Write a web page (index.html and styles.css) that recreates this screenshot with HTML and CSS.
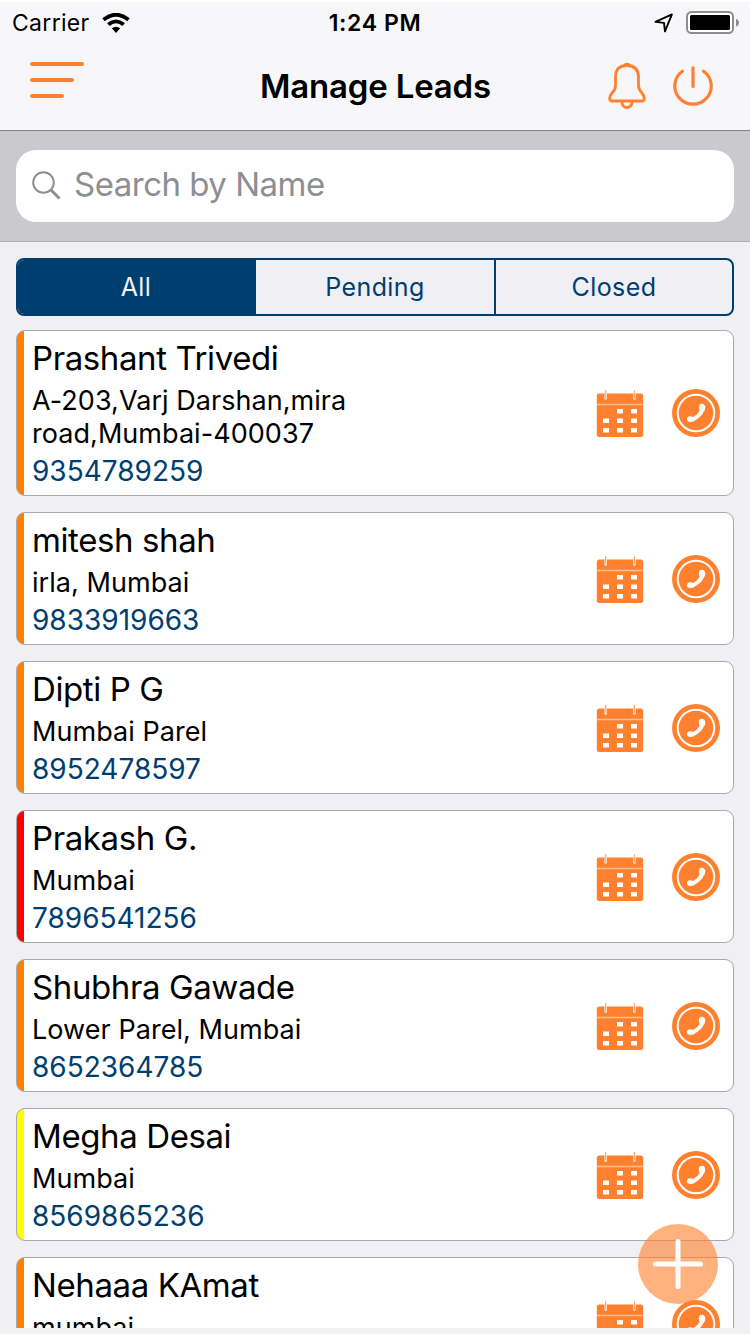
FILE: index.html
```html
<!DOCTYPE html>
<html lang="en">

<head>
    <meta charset="UTF-8">
    <meta name="viewport" content="width=device-width, initial-scale=1.0">
    <title>Manage Leads</title>
    <link rel="stylesheet" href="styles.css">
</head>

<body>
    <!-- shared icons -->
    <svg class="sprite" width="0" height="0">
        <symbol id="calendar" viewBox="0 0 48 48">
            <rect x="0.8" y="4.600" width="46.4" height="43.400" rx="2.5" fill="#ff812f" />
            <path d="M1 15.500h46" stroke="#ffc093" stroke-width="1.4" />
            <path d="M9.700 5v4.500M38.500 5v4.500" stroke="#fff" stroke-width="2.400" stroke-linecap="round" />
            <path d="M9.700 1.500v7.500M38.500 1.500v7.500" stroke="#ffa870" stroke-width="1.3" stroke-linecap="round" />
            <path d="M21 20h6v4.500h-6zM35 20h6v4.500h-6zM7 29.5h6v4.500h-6zM21 29.5h6v4.500h-6zM35 29.5h6v4.500h-6zM7 39h6v4.500h-6zM21 39h6v4.500h-6zM35 39h6v4.500h-6z" fill="#fff" />
        </symbol>
        <symbol id="call" viewBox="0 0 48 48">
            <circle cx="24" cy="24" r="24" fill="#ff812f" />
            <circle cx="24" cy="24" r="18.3" fill="none" stroke="#fff" stroke-width="2" />
            <path d="M26.800 18q0-3 3-3.200 3.300.2 3.500 3.700-.1 3.300-1.500 4.100-2 5-8.500 8.600-1.300 1.700-4.700 1.800-3.600.1-3.700-2.400.1-3 3-3.400 2.200-.1 3.300.9 4.700-2.400 6.500-6.400-.9-1-.9-3.700z" fill="#fff" />
        </symbol>
    </svg>

    <div class="screen">
        <header class="top">
            <div class="status-bar">
                <div class="carrier">
                    <span>Carrier</span>
                    <svg width="28" height="20" viewBox="0 0 28 20">
                        <path d="M1.500 6.800Q14-3.400 26.500 6.800M6.300 11.500Q14 5.300 21.700 11.500" fill="none" stroke="#000" stroke-width="3.800" />
                        <path d="M14 20l-4.200-4.700q4.200-3 8.400 0z" />
                    </svg>
                </div>
                <div class="time">1:24 PM</div>
                <div class="battery">
                    <svg class="location" width="20" height="20" viewBox="0 0 20 20">
                        <path d="M1.500 8.900L17.900 1.400 11 18.400 10 9.900z" fill="none" stroke="#000" stroke-width="1.900" stroke-linejoin="round" />
                    </svg>
                    <svg width="53" height="24" viewBox="0 0 53 24">
                        <rect x="1" y="1" width="46" height="21" rx="4.500" fill="#fff" stroke="#8e8e90" stroke-width="2" />
                        <rect x="4" y="4" width="40" height="15" rx="1.500" />
                        <path d="M50 8q3 1 3 3.800t-3 3.700z" fill="#8e8e90" />
                    </svg>
                </div>
            </div>
            <div class="nav-bar">
                <svg class="menu" width="54" height="38" viewBox="0 0 54 38">
                    <path d="M2 3h50M2 19h40M2 35h30" stroke="#ff812f" stroke-width="4" stroke-linecap="round" />
                </svg>
                <h1>Manage Leads</h1>
                <div class="nav-actions">
                    <svg width="38" height="48" viewBox="0 0 38 48">
                        <g fill="none" stroke="#ff812f" stroke-width="2.800" stroke-linejoin="round">
                            <path d="M7.500 15.500Q7.500 3.500 19 3.500t11.500 12v8Q30.500 27.500 34 31q2.600 3.200 2.300 6.100-.3 1.900-2.200 1.900H3.900q-1.900 0-2.200-1.900Q1.400 34.200 4 31q3.500-3.500 3.500-7.500z" />
                            <path d="M13.800 40q.8 5.500 5.200 5.500t5.200-5.500" />
                        </g>
                        <path d="M14.600 4q1.200-3.300 4.400-3.300t4.400 3.300z" fill="#ff812f" />
                    </svg>
                    <svg width="40" height="40" viewBox="0 0 40 40">
                        <path d="M20 1.800v18.700M9.400 5.200A18.200 18.200 0 1 0 30.600 5.200" fill="none" stroke="#ff812f" stroke-width="3.200" stroke-linecap="round" />
                    </svg>
                </div>
            </div>
        </header>

        <div class="search">
            <div class="search-box">
                <svg width="30" height="30" viewBox="0 0 30 30">
                    <circle cx="11.500" cy="11.500" r="10.300" fill="none" stroke="#8e8e93" stroke-width="2" />
                    <path d="M18.800 18.800L27.500 27.500" stroke="#8e8e93" stroke-width="3" />
                </svg>
                <span>Search by Name</span>
            </div>
        </div>

        <div class="tabs">
            <div class="tab active">All</div>
            <div class="tab">Pending</div>
            <div class="tab">Closed</div>
        </div>

        <main class="leads">
            <div class="lead">
                <div class="info">
                    <div class="name">Prashant Trivedi</div>
                    <div class="address">A-203,Varj Darshan,mira<br>road,Mumbai-400037</div>
                    <div class="phone">9354789259</div>
                </div>
                <svg class="icon"><use href="#calendar" /></svg>
                <svg class="icon"><use href="#call" /></svg>
            </div>
            <div class="lead">
                <div class="info">
                    <div class="name">mitesh shah</div>
                    <div class="address">irla, Mumbai</div>
                    <div class="phone">9833919663</div>
                </div>
                <svg class="icon"><use href="#calendar" /></svg>
                <svg class="icon"><use href="#call" /></svg>
            </div>
            <div class="lead">
                <div class="info">
                    <div class="name">Dipti P G</div>
                    <div class="address">Mumbai Parel</div>
                    <div class="phone">8952478597</div>
                </div>
                <svg class="icon"><use href="#calendar" /></svg>
                <svg class="icon"><use href="#call" /></svg>
            </div>
            <div class="lead red">
                <div class="info">
                    <div class="name">Prakash G.</div>
                    <div class="address">Mumbai</div>
                    <div class="phone">7896541256</div>
                </div>
                <svg class="icon"><use href="#calendar" /></svg>
                <svg class="icon"><use href="#call" /></svg>
            </div>
            <div class="lead">
                <div class="info">
                    <div class="name">Shubhra Gawade</div>
                    <div class="address">Lower Parel, Mumbai</div>
                    <div class="phone">8652364785</div>
                </div>
                <svg class="icon"><use href="#calendar" /></svg>
                <svg class="icon"><use href="#call" /></svg>
            </div>
            <div class="lead yellow">
                <div class="info">
                    <div class="name">Megha Desai</div>
                    <div class="address">Mumbai</div>
                    <div class="phone">8569865236</div>
                </div>
                <svg class="icon"><use href="#calendar" /></svg>
                <svg class="icon"><use href="#call" /></svg>
            </div>
            <div class="lead">
                <div class="info">
                    <div class="name">Nehaaa KAmat</div>
                    <div class="address">mumbai</div>
                </div>
                <svg class="icon"><use href="#calendar" /></svg>
                <svg class="icon"><use href="#call" /></svg>
            </div>
        </main>

        <div class="add-button">
            <svg width="50" height="50" viewBox="0 0 50 50">
                <path d="M25 2.500v45M2.500 25h45" stroke="#fff" stroke-width="5" stroke-linecap="round" />
            </svg>
        </div>
    </div>
</body>

</html>
```
FILE: styles.css
```css
* {
    box-sizing: border-box;
}

body {
    margin: 0;
    background-color: #efeff4;
    font-family: Inter, "Liberation Sans", sans-serif;
    color: #000;
}

svg {
    display: block;
    flex-shrink: 0;
}

.sprite {
    position: absolute;
}

.screen {
    position: relative;
    display: flex;
    flex-direction: column;
    width: 750px;
    height: 1334px;
    padding-bottom: 6px;
    overflow: hidden;
}

.top {
    height: 131px;
    flex-shrink: 0;
    background-color: #f7f7f9;
    border-top: 2px solid #fff;
    border-bottom: 1px solid #828286;
}

.status-bar {
    display: grid;
    grid-template-columns: 1fr auto 1fr;
    align-items: center;
    height: 41px;
    padding: 0 12px;
    font-size: 23px;
}

.carrier {
    display: flex;
    align-items: center;
    gap: 12px;
    letter-spacing: 0.3px;
}

.carrier span {
    margin-top: 1px;
}

.time {
    margin-top: 1px;
    font-weight: 600;
    font-size: 23px;
    letter-spacing: 0.6px;
}

.battery {
    display: flex;
    align-items: center;
    justify-content: flex-end;
    gap: 12px;
    margin-right: -1px;
}

.nav-bar {
    display: grid;
    grid-template-columns: 1fr auto 1fr;
    align-items: center;
    height: 86px;
    padding: 0 37px 0 30px;
}

.menu {
    margin-top: -13px;
}

h1 {
    margin: -1px -3px 0 5px;
    font-size: 33px;
    font-weight: 600;
    line-height: 40px;
    letter-spacing: -0.2px;
}

.nav-actions {
    display: flex;
    align-items: center;
    justify-content: flex-end;
    gap: 27px;
}

.search {
    height: 111px;
    flex-shrink: 0;
    padding: 19px 16px;
    background-color: #c9c9ce;
    border-bottom: 1px solid #b1b1b6;
}

.search-box {
    display: flex;
    align-items: center;
    gap: 12px;
    height: 72px;
    padding: 0 16px;
    border-radius: 20px;
    background-color: #fff;
    color: #8e8e93;
    font-size: 33px;
    letter-spacing: -0.5px;
}

.search-box span {
    margin-top: -4px;
}

.tabs {
    display: flex;
    flex-shrink: 0;
    height: 58px;
    margin: 16px 16px 14px;
    border: 2px solid #003e70;
    border-radius: 8px;
    color: #003e70;
    overflow: hidden;
}

.tab {
    flex: 0 0 238px;
    display: flex;
    align-items: center;
    justify-content: center;
    font-size: 25px;
    letter-spacing: 0.4px;
}

.tab:last-child {
    border-left: 2px solid #003e70;
}

.tab.active {
    padding-right: 2px;
    background-color: #003e70;
    color: #efeff4;
}

.leads {
    flex: 1;
    min-height: 0;
    padding: 0 16px;
    overflow: hidden;
}

.lead {
    display: flex;
    align-items: center;
    gap: 28px;
    height: 133px;
    margin-bottom: 16px;
    padding-right: 13px;
    border: 1px solid #a9a9ad;
    border-radius: 9px;
    background: linear-gradient(to right, #ff8000 7px, #fff 7px);
}

.lead:first-child {
    height: 166px;
}

.lead.red {
    background: linear-gradient(to right, #ff0000 7px, #fff 7px);
}

.lead.yellow {
    background: linear-gradient(to right, #ffff00 7px, #fff 7px);
}

.info {
    flex: 1;
    align-self: flex-start;
    padding: 6px 0 0 15px;
}

.name {
    font-size: 33px;
    line-height: 42px;
    letter-spacing: -0.4px;
}

.address {
    margin: 5px 0 4px;
    font-size: 27px;
    line-height: 33px;
    letter-spacing: 0.05px;
}

.phone {
    font-size: 28px;
    line-height: 34px;
    color: #003e70;
}

.icon {
    width: 48px;
    height: 48px;
}

.add-button {
    position: absolute;
    left: 638px;
    top: 1224px;
    display: flex;
    align-items: center;
    justify-content: center;
    width: 80px;
    height: 80px;
    border-radius: 50%;
    background-color: rgba(255, 129, 47, 0.62);
}
```
